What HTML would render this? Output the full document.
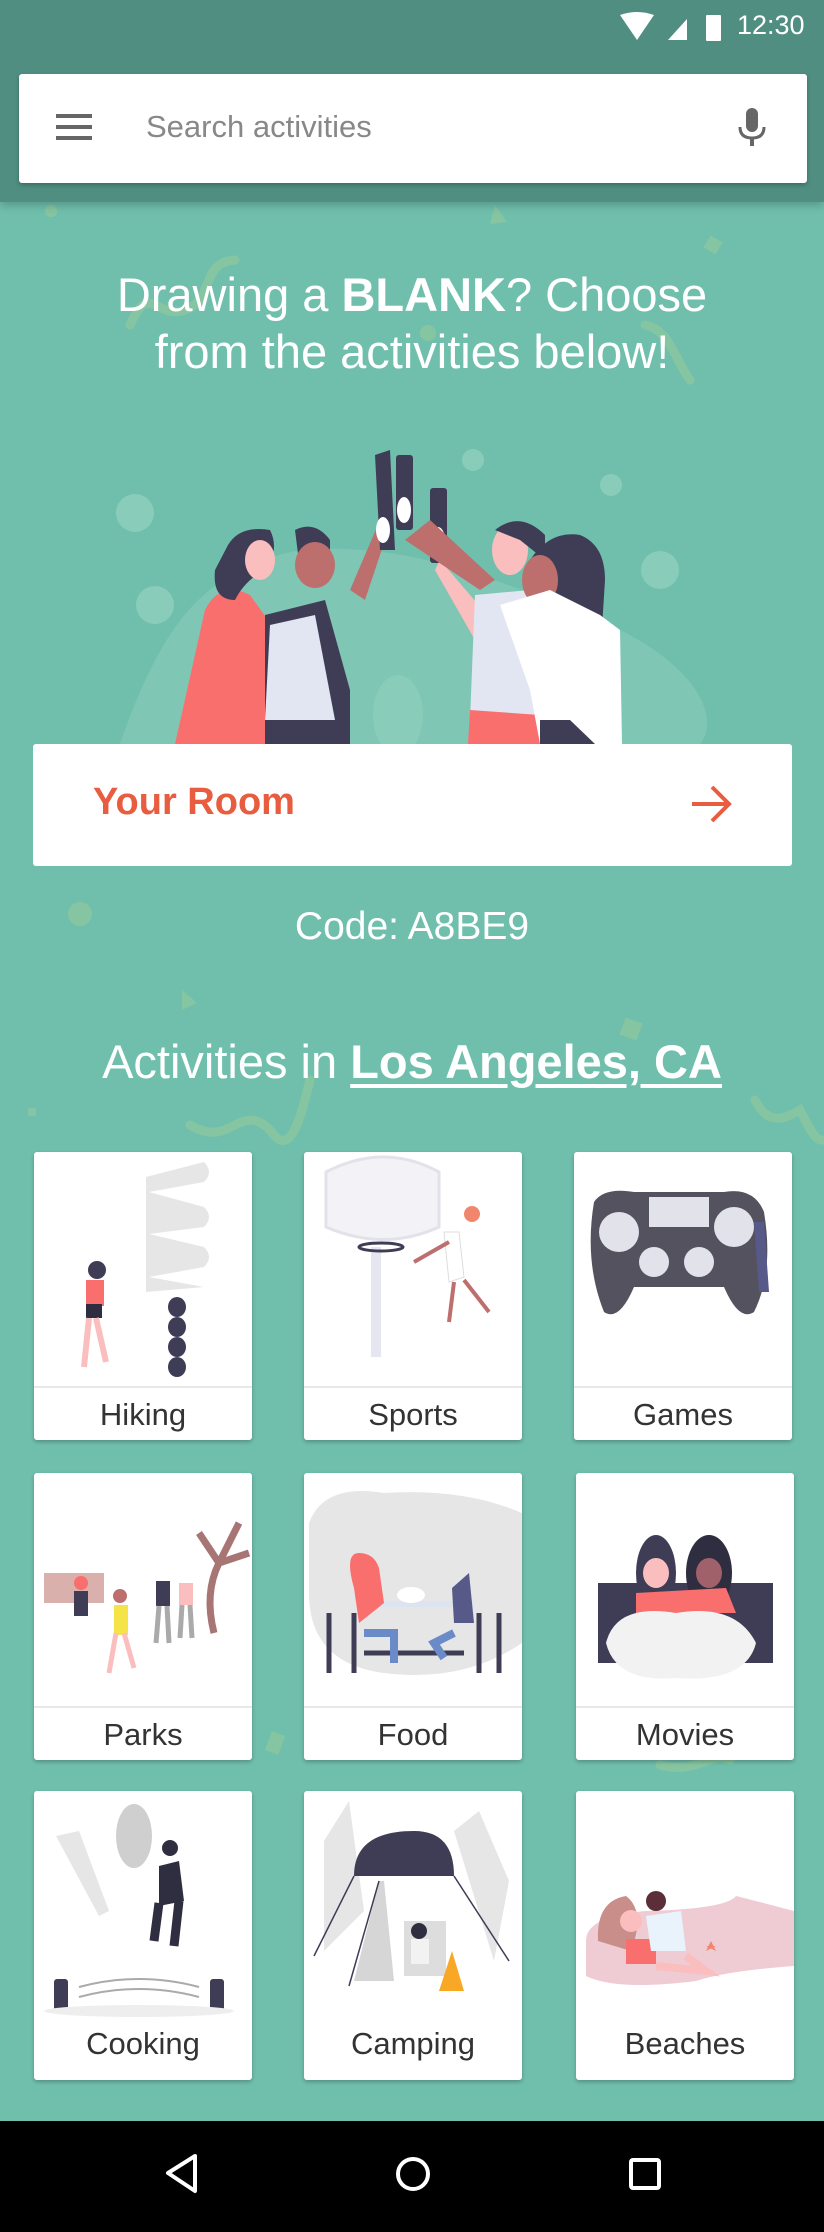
<!DOCTYPE html>
<html><head><meta charset="utf-8">
<style>
*{margin:0;padding:0;box-sizing:border-box}
body{width:824px;height:2232px;background:#70BFAD;font-family:"Liberation Sans",sans-serif;position:relative;overflow:hidden}
.abs{position:absolute}
.hdr{left:0;top:0;width:824px;height:202px;background:#508E82;box-shadow:0 4px 8px rgba(0,0,0,.2)}
.search{left:19px;top:74px;width:788px;height:109px;background:#fff;border-radius:3px;box-shadow:0 2px 4px rgba(0,0,0,.25)}
.card{background:#fff;border-radius:3px;box-shadow:0 2px 4px rgba(0,0,0,.25);width:218px;overflow:hidden}
.card .lbl{position:absolute;left:0;right:0;bottom:0;height:54px;border-top:2px solid #e8e8e8;text-align:center;font-size:31px;line-height:54px;color:#333}
.card svg{position:absolute;left:0;top:0}
.t{color:#fff;text-align:center;width:824px;left:0}
</style></head><body>
<svg class="abs" style="left:0;top:0" width="824" height="2122">
<g fill="#8CC79E" opacity=".8">
<circle cx="51" cy="211" r="6"/><polygon points="495,205 507,222 490,224"/><rect x="706" y="238" width="14" height="14" transform="rotate(30 713 245)"/>
<circle cx="428" cy="333" r="8"/><circle cx="80" cy="914" r="12"/><polygon points="182,990 197,1003 182,1010"/>
<rect x="622" y="1020" width="18" height="18" transform="rotate(20 631 1029)"/><rect x="28" y="1108" width="8" height="8"/>
<rect x="268" y="1733" width="14" height="20" transform="rotate(20 275 1743)"/>
</g>
<g fill="none" stroke="#8CC79E" stroke-width="9" stroke-linecap="round" opacity=".8">
<path d="M235 260 C200 262 215 300 185 310 C155 320 150 280 130 325"/>
<path d="M645 325 C670 330 675 360 690 380"/>
<path d="M755 1100 C770 1130 790 1115 800 1110 C810 1130 815 1140 822 1140"/>
<path d="M190 1125 C230 1150 240 1100 270 1130 C290 1160 300 1120 310 1080"/>
<path d="M660 1765 C700 1775 710 1750 730 1760"/>
</g>
</svg>
<div class="abs hdr"></div>
<svg class="abs" style="left:618px;top:12px" width="120" height="30">
<path d="M2 3 Q19 -3 36 3 L19 28 Z" fill="#fff"/>
<path d="M50 28 L69 7 L69 28 Z" fill="#fff"/>
<rect x="88" y="3" width="15" height="26" rx="1" fill="#fff"/>
</svg>
<div class="abs" style="left:737px;top:10px;color:#fff;font-size:27px">12:30</div>
<div class="abs search">
<div class="abs" style="left:37px;top:40px;width:36px;height:4px;background:#666;box-shadow:0 11px 0 #666,0 22px 0 #666"></div>
<div class="abs" style="left:127px;top:35px;font-size:31px;color:#888">Search activities</div>
<svg class="abs" style="left:718px;top:34px" width="30" height="42"><rect x="9" y="0" width="12" height="24" rx="6" fill="#666"/><path d="M3 19 Q3 30 15 30 Q27 30 27 19" fill="none" stroke="#666" stroke-width="3"/><rect x="13" y="30" width="4" height="8" fill="#666"/></svg>
</div>
<div class="abs t" style="top:266px;font-size:47px;line-height:57px">Drawing a <b>BLANK</b>? Choose<br>from the activities below!</div>
<svg class="abs" style="left:100px;top:430px" width="620" height="314" viewBox="0 0 620 314">
<path d="M20 314 C60 200 100 140 200 120 C320 110 420 160 520 200 C600 240 620 290 600 314 Z" fill="#80C6B5"/>
<g fill="#89CCBA"><circle cx="35" cy="83" r="19"/><circle cx="55" cy="175" r="19"/><circle cx="560" cy="140" r="19"/><circle cx="373" cy="30" r="11"/><circle cx="511" cy="55" r="11"/><ellipse cx="298" cy="285" rx="25" ry="40"/></g>
<path d="M75 314 L105 180 Q120 150 150 165 L175 200 L165 314 Z" fill="#F86F6E"/>
<path d="M128 115 Q140 95 170 100 Q180 120 165 140 Q145 150 135 170 Q112 170 115 140 Z" fill="#3F3D56"/>
<ellipse cx="160" cy="130" rx="15" ry="20" fill="#FBBEBE"/>
<path d="M165 185 L225 170 L250 260 L250 314 L165 314 Z" fill="#3F3D56"/>
<path d="M170 195 L215 185 L235 290 L165 290 Z" fill="#E2E6F3"/>
<path d="M195 100 Q215 90 230 110 L230 140 L200 140 Z" fill="#3F3D56"/>
<ellipse cx="215" cy="135" rx="20" ry="23" fill="#BD6F6D"/>
<path d="M250 160 L280 90 L290 95 L265 170 Z" fill="#BD6F6D"/>
<path d="M275 25 L290 20 L295 120 L280 120 Z" fill="#3F3D56"/><rect x="296" y="25" width="17" height="75" rx="3" fill="#3F3D56"/><rect x="330" y="58" width="17" height="75" rx="3" fill="#3F3D56"/>
<ellipse cx="304" cy="80" rx="7" ry="13" fill="#fff"/><ellipse cx="338" cy="110" rx="7" ry="13" fill="#fff"/><ellipse cx="283" cy="100" rx="7" ry="13" fill="#fff"/>
<path d="M340 130 L400 200 L375 210 L335 140 Z" fill="#FBBEBE"/>
<path d="M375 165 L430 160 L445 290 L370 290 Z" fill="#E2E6F3"/>
<path d="M370 280 L440 285 L440 314 L368 314 Z" fill="#F86F6E"/>
<path d="M305 110 L380 160 L395 150 L330 90 Z" fill="#BD6F6D"/>
<ellipse cx="410" cy="120" rx="18" ry="25" fill="#FBBEBE"/>
<path d="M395 100 Q420 80 445 105 L445 130 L420 110 Z" fill="#3F3D56"/>
<path d="M430 130 Q450 100 480 105 Q505 115 505 150 L500 230 L470 270 Z" fill="#3F3D56"/>
<ellipse cx="440" cy="150" rx="18" ry="25" fill="#BD6F6D"/>
<path d="M400 175 L450 160 L500 185 L520 200 L522 314 L440 314 L430 260 Z" fill="#fff"/>
<path d="M440 290 L470 290 L495 314 L440 314 Z" fill="#3F3D56"/>
</svg>
<div class="abs" style="left:33px;top:744px;width:759px;height:122px;background:#fff;border-radius:3px"></div>
<div class="abs" style="left:93px;top:781px;font-size:38px;font-weight:bold;color:#E85C3F">Your Room</div>
<svg class="abs" style="left:690px;top:783px" width="44" height="42"><path d="M2 21 H38 M22 4 L39 21 L22 38" fill="none" stroke="#E85C3F" stroke-width="4"/></svg>
<div class="abs t" style="top:905px;font-size:39px">Code: A8BE9</div>
<div class="abs t" style="top:1034px;font-size:47px">Activities in <b style="text-decoration:underline;text-underline-offset:6px">Los Angeles, CA</b></div>

<div class="abs card" style="left:34px;top:1152px;height:288px">
<svg width="218" height="233"><path d="M112 25 L170 10 Q180 20 170 30 L115 40 L170 55 Q180 65 170 75 L115 82 L170 95 Q180 105 170 115 L115 125 L170 135 L112 140 Z" fill="#e6e6e6"/>
<g fill="#3F3D56"><ellipse cx="143" cy="155" rx="9" ry="10"/><ellipse cx="143" cy="175" rx="9" ry="10"/><ellipse cx="143" cy="195" rx="9" ry="10"/><ellipse cx="143" cy="215" rx="9" ry="10"/></g>
<circle cx="63" cy="118" r="9" fill="#3F3D56"/><rect x="52" y="128" width="18" height="26" fill="#F86F6E"/><rect x="52" y="152" width="16" height="14" fill="#2f2e41"/><path d="M55 166 L50 215 M62 166 L72 210" stroke="#FBBEBE" stroke-width="6"/></svg>
<div class="lbl">Hiking</div></div>
<div class="abs card" style="left:304px;top:1152px;height:288px">
<svg width="218" height="233"><path d="M22 20 Q80 -10 135 20 L135 75 Q80 100 22 75 Z" fill="#f2f2f7" stroke="#e2e2ea" stroke-width="3"/><rect x="67" y="95" width="10" height="110" fill="#e6e6f0"/><ellipse cx="77" cy="95" rx="22" ry="4" fill="none" stroke="#3F3D56" stroke-width="3"/><circle cx="168" cy="62" r="8" fill="#F1866D"/><path d="M140 80 L155 80 L160 125 L145 130 Z" fill="#fff" stroke="#ddd"/><path d="M110 110 L145 90 M150 130 L145 170 M160 128 L185 160" stroke="#BD6F6D" stroke-width="4"/></svg>
<div class="lbl">Sports</div></div>
<div class="abs card" style="left:574px;top:1152px;height:288px">
<svg width="218" height="233"><path d="M20 50 Q30 35 60 40 L150 40 Q180 35 190 60 Q200 120 180 160 Q165 170 150 135 L60 135 Q45 170 30 160 Q10 110 20 50 Z" fill="#55525F"/><rect x="75" y="45" width="60" height="30" fill="#e2e2ea"/><circle cx="45" cy="80" r="20" fill="#e2e2ea"/><circle cx="160" cy="75" r="20" fill="#e2e2ea"/><circle cx="80" cy="110" r="15" fill="#e2e2ea"/><circle cx="125" cy="110" r="15" fill="#e2e2ea"/><path d="M180 70 L190 70 L195 140 L185 140 Z" fill="#575A89"/></svg>
<div class="lbl">Games</div></div>

<div class="abs card" style="left:34px;top:1473px;height:287px">
<svg width="218" height="233"><path d="M180 160 Q170 120 185 90 L165 60 M185 90 L205 50 M185 90 L215 80" stroke="#A67574" stroke-width="7" fill="none"/><rect x="10" y="100" width="60" height="30" fill="#C98E89" opacity=".7"/><circle cx="47" cy="110" r="7" fill="#F86F6E"/><rect x="40" y="118" width="14" height="25" fill="#3F3D56"/><circle cx="86" cy="123" r="7" fill="#BD6F6D"/><rect x="80" y="132" width="14" height="30" fill="#F5E447"/><path d="M82 160 L75 200 M90 160 L100 195" stroke="#FBBEBE" stroke-width="5"/><rect x="122" y="108" width="14" height="25" fill="#3F3D56"/><rect x="145" y="110" width="14" height="22" fill="#FBBEBE"/><path d="M125 133 L122 170 M133 133 L135 170 M148 132 L146 165 M156 132 L158 165" stroke="#aaa" stroke-width="5"/></svg>
<div class="lbl">Parks</div></div>
<div class="abs card" style="left:304px;top:1473px;height:287px">
<svg width="218" height="233"><path d="M5 50 Q20 10 80 20 Q160 15 218 40 L218 170 Q160 210 80 200 Q5 190 5 120 Z" fill="#e6e6e6"/><rect x="55" y="128" width="115" height="6" fill="#dde3f0"/><ellipse cx="107" cy="122" rx="14" ry="8" fill="#fff"/><path d="M50 115 Q40 80 55 80 Q70 80 75 95 L80 130 L55 150 Z" fill="#F86F6E"/><path d="M148 115 L165 100 L170 150 L150 150 Z" fill="#575A89"/><path d="M25 140 L25 200 M50 140 L50 200 M60 180 L160 180 M175 140 L175 200 M195 140 L195 200" stroke="#3F3D56" stroke-width="5"/><path d="M60 160 L90 160 L90 190 M150 160 L130 170 L140 185" stroke="#6B8BC8" stroke-width="8" fill="none"/></svg>
<div class="lbl">Food</div></div>
<div class="abs card" style="left:576px;top:1473px;height:287px">
<svg width="218" height="233"><rect x="22" y="110" width="175" height="80" fill="#3F3D56"/><ellipse cx="80" cy="100" rx="20" ry="38" fill="#3F3D56"/><ellipse cx="133" cy="100" rx="23" ry="38" fill="#2f2e41"/><ellipse cx="80" cy="100" rx="13" ry="15" fill="#FBBEBE"/><ellipse cx="133" cy="100" rx="13" ry="15" fill="#A0616A"/><path d="M60 120 L150 115 L160 140 L60 140 Z" fill="#F86F6E"/><path d="M30 170 Q40 130 100 140 Q160 130 180 170 Q170 210 100 205 Q40 210 30 170 Z" fill="#f2f2f2"/></svg>
<div class="lbl">Movies</div></div>

<div class="abs card" style="left:34px;top:1791px;height:289px">
<svg width="218" height="230"><ellipse cx="100" cy="45" rx="18" ry="32" fill="#cfcfcf"/><path d="M22 45 L45 40 L75 120 L65 125 Z" fill="#e6e6e6"/><circle cx="136" cy="57" r="8" fill="#2f2e41"/><path d="M125 75 L145 70 L150 110 L125 115 Z" fill="#2f2e41"/><path d="M125 112 L120 150 M145 110 L140 155" stroke="#2f2e41" stroke-width="9"/><rect x="20" y="188" width="14" height="32" rx="3" fill="#3F3D56"/><rect x="176" y="188" width="14" height="32" rx="3" fill="#3F3D56"/><path d="M45 196 Q105 180 165 196 M45 206 Q105 190 165 206" stroke="#aaa" stroke-width="2" fill="none"/><ellipse cx="105" cy="220" rx="95" ry="6" fill="#eee"/></svg>
<div class="lbl" style="border:0;height:72px;line-height:72px">Cooking</div></div>
<div class="abs card" style="left:304px;top:1791px;height:289px">
<svg width="218" height="230"><path d="M20 50 L45 10 L60 120 L20 160 Z M150 40 L175 20 L205 90 L190 170 Z" fill="#e6e6e6"/><path d="M50 85 Q50 40 110 40 Q150 40 150 85 Z" fill="#3F3D56"/><path d="M75 90 L50 190 L90 190 L80 90 Z" fill="#d6d6d6"/><path d="M50 85 L10 165 M150 85 L205 170 M75 90 L45 195" stroke="#3F3D56" stroke-width="1.5"/><rect x="100" y="130" width="42" height="55" fill="#ddd"/><circle cx="115" cy="140" r="8" fill="#2f2e41"/><rect x="107" y="148" width="18" height="25" fill="#f2f2f2"/><path d="M148 160 L135 200 L160 200 Z" fill="#F9A826"/></svg>
<div class="lbl" style="border:0;height:72px;line-height:72px">Camping</div></div>
<div class="abs card" style="left:576px;top:1791px;height:289px">
<svg width="218" height="230"><path d="M10 150 Q10 125 70 120 Q150 118 160 105 Q180 110 218 120 L218 175 Q150 180 120 190 Q40 200 10 185 Z" fill="#EFCCD4"/><path d="M22 150 Q20 110 50 105 Q70 120 55 160 Z" fill="#C98E89"/><circle cx="55" cy="130" r="11" fill="#FBBEBE"/><rect x="50" y="148" width="30" height="25" fill="#F86F6E"/><circle cx="80" cy="110" r="10" fill="#5C2E3A"/><path d="M70 125 L105 120 L110 160 L75 160 Z" fill="#E8F3FB"/><path d="M80 175 L130 180 L110 165" stroke="#FBBEBE" stroke-width="8" fill="none"/><path d="M130 160 l5 -10 l5 10 l-10 -5 h10 z" fill="#F1866D"/></svg>
<div class="lbl" style="border:0;height:72px;line-height:72px">Beaches</div></div>

<div class="abs" style="left:0;top:2121px;width:824px;height:111px;background:#000"></div>
<svg class="abs" style="left:0;top:2121px" width="824" height="111">
<path d="M195 35 L168 52 L195 70 Z" fill="none" stroke="#fff" stroke-width="4" stroke-linejoin="round"/>
<circle cx="413" cy="53" r="15" fill="none" stroke="#fff" stroke-width="4"/>
<rect x="631" y="39" width="28" height="28" rx="2" fill="none" stroke="#fff" stroke-width="4"/>
</svg>
</body></html>
